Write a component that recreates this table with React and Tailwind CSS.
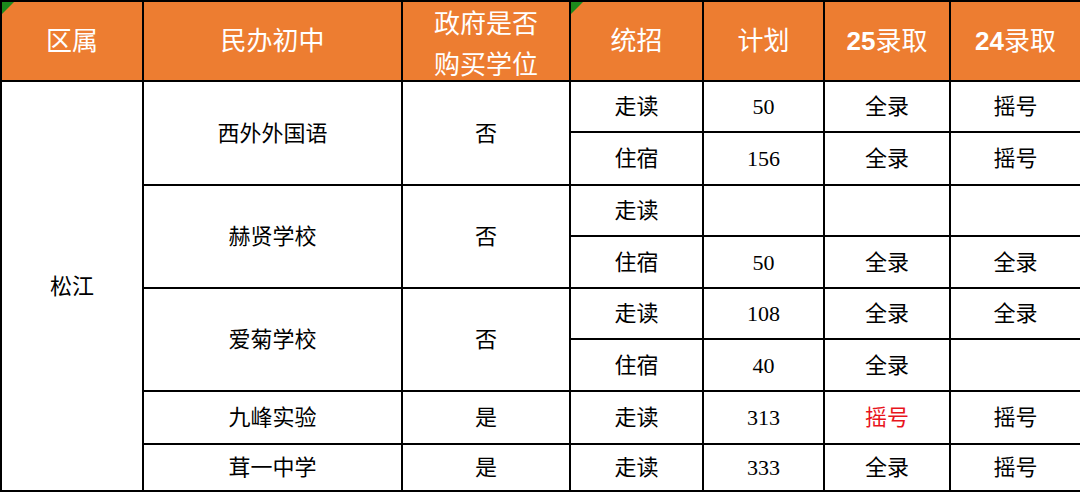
import React from 'react';

// 松江 民办初中 招生一览
const ROWS = [
  { school: '西外外国语', buy: '否', sub: [['走读', '50', '全录', '摇号'], ['住宿', '156', '全录', '摇号']] },
  { school: '赫贤学校', buy: '否', sub: [['走读', '', '', ''], ['住宿', '50', '全录', '全录']] },
  { school: '爱菊学校', buy: '否', sub: [['走读', '108', '全录', '全录'], ['住宿', '40', '全录', '']] },
  { school: '九峰实验', buy: '是', sub: [['走读', '313', '摇号', '摇号', true]] },
  { school: '茸一中学', buy: '是', sub: [['走读', '333', '全录', '摇号']] },
];

const HEIGHTS = [51, 53, 51, 52, 51, 52, 53, 47];

const Flag = () => (
  <span className="absolute left-0 top-0 w-0 h-0 border-t-[12px] border-r-[12px] border-t-[#1c8a1c] border-r-transparent" />
);

export default function App() {
  const font = { fontFamily: '"Liberation Serif", "Noto Sans CJK SC", serif' };
  const td = 'border-2 border-black text-center align-middle p-0 text-[22px]';
  const th = 'relative border-2 border-black bg-[#ed7d31] text-white text-center align-middle p-0 font-normal text-[26px]';
  const num = { fontFamily: '"Liberation Sans", sans-serif' };
  let r = 0;

  return (
    <div className="w-[1080px] h-[492px] overflow-hidden bg-white text-black" style={font}>
      <table className="w-[1080px] table-fixed border-collapse">
        <colgroup>
          <col className="w-[142px]" />
          <col className="w-[259px]" />
          <col className="w-[168px]" />
          <col className="w-[133px]" />
          <col className="w-[121px]" />
          <col className="w-[126px]" />
          <col className="w-[131px]" />
        </colgroup>
        <thead>
          <tr className="h-[80px]">
            <th className={th}><Flag />区属</th>
            <th className={th}>民办初中</th>
            <th className={th}>
              <div className="flex h-[77px] flex-col items-center overflow-hidden">
                <span className="block h-[38px] pt-[3px] leading-[38px]">政府是否</span>
                <span className="block h-[39px] pt-[6px] leading-[38px]">购买学位</span>
              </div>
            </th>
            <th className={th}><Flag />统招</th>
            <th className={th}>计划</th>
            <th className={th}>
              <span className="font-bold" style={num}>25</span>录取
            </th>
            <th className={th}>
              <span className="font-bold" style={num}>24</span>录取
            </th>
          </tr>
        </thead>
        <tbody>
          {ROWS.map((s, si) =>
            s.sub.map((row, i) => {
              const h = HEIGHTS[r++];
              return (
                <tr key={si + '-' + i} style={{ height: h }}>
                  {si === 0 && i === 0 && (
                    <td rowSpan={8} className={td}>松江</td>
                  )}
                  {i === 0 && (
                    <>
                      <td rowSpan={s.sub.length} className={td}>{s.school}</td>
                      <td rowSpan={s.sub.length} className={td}>{s.buy}</td>
                    </>
                  )}
                  <td className={td}>{row[0]}</td>
                  <td className={td + ' text-[19px]'}>{row[1]}</td>
                  <td className={td + (row[4] ? ' text-[#e8141c]' : '')}>{row[2]}</td>
                  <td className={td}>{row[3]}</td>
                </tr>
              );
            })
          )}
        </tbody>
      </table>
    </div>
  );
}
